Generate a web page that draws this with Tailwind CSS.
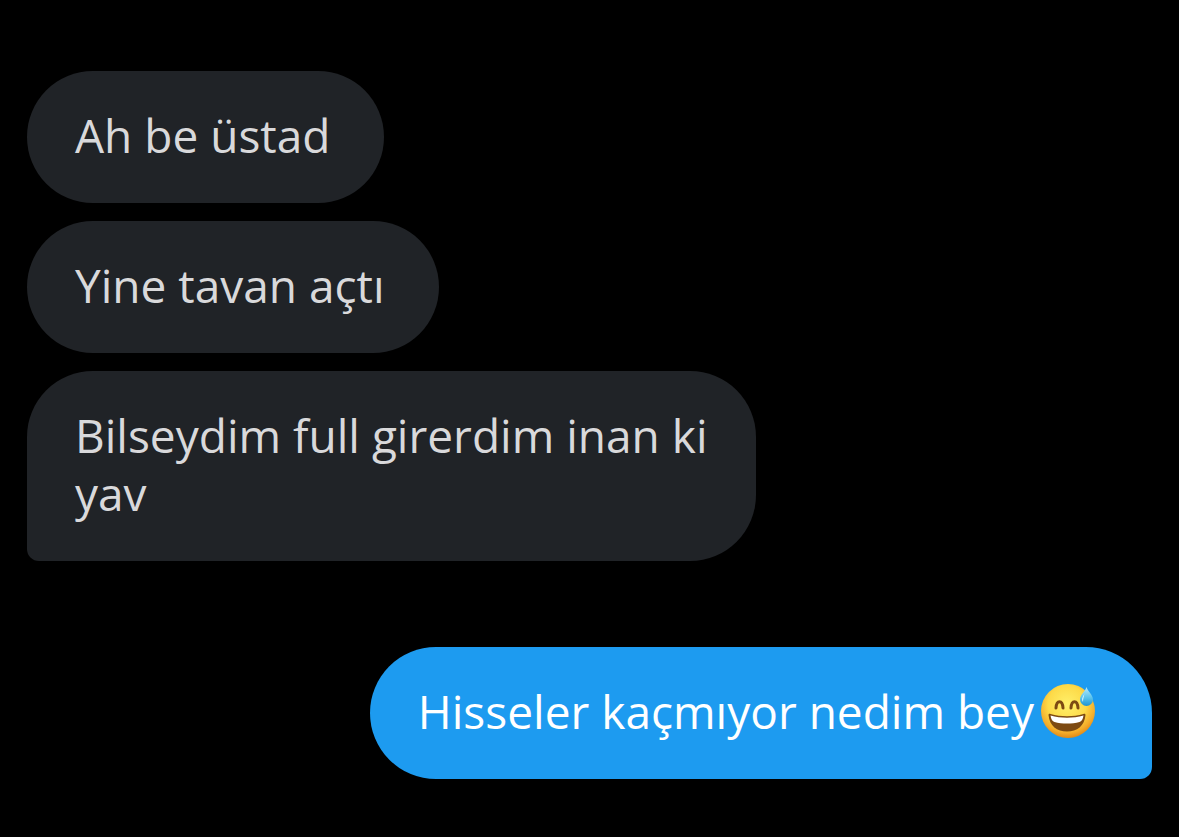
<!DOCTYPE html>
<html lang="tr">

<head>
    <meta charset="UTF-8">
    <meta name="viewport" content="width=device-width, initial-scale=1.0">
    <title>Mesajlar</title>
    <script src="https://cdn.jsdelivr.net/npm/@tailwindcss/browser@4"></script>
</head>

<body class="bg-black min-h-screen font-['Open_Sans',sans-serif] text-[46px] leading-[58px]">
    <main class="flex flex-col px-[27px] pt-[71px] pb-[58px]">
        <!-- Received messages -->
        <section class="flex flex-col items-start gap-[18px]">
            <p class="bg-[#202327] text-[#d9d9db] rounded-[66px] pl-12 pr-[54px] pt-[35px] pb-[39px]">Ah be üstad</p>
            <p class="bg-[#202327] text-[#d9d9db] rounded-[66px] pl-12 pr-[54px] pt-[35px] pb-[39px]">Yine tavan açtı</p>
            <p class="bg-[#202327] text-[#d9d9db] rounded-[66px] rounded-bl-[12px] px-12 pt-[35px] pb-[39px] max-w-[729px]">Bilseydim full girerdim inan ki yav</p>
        </section>

        <!-- Sent message -->
        <section class="flex flex-col items-end mt-[86px]">
            <p class="flex items-center gap-1.5 bg-[#1d9bf0] text-white rounded-[66px] rounded-br-[12px] pl-12 pr-14 pt-[35px] pb-[39px]">
                Hisseler kaçmıyor nedim bey
                <svg class="size-14 shrink-0" viewBox="0 0 56 56" role="img" aria-label="Terleyen gülen yüz">
                    <defs>
                        <radialGradient id="face" cx="0.48" cy="0.38" r="0.64">
                            <stop offset="0" stop-color="#fff06a" />
                            <stop offset="0.55" stop-color="#fdda48" />
                            <stop offset="0.82" stop-color="#f4ac2a" />
                            <stop offset="1" stop-color="#dd8214" />
                        </radialGradient>
                        <linearGradient id="drop" x1="0" y1="0" x2="0" y2="1">
                            <stop offset="0" stop-color="#b9ecfb" />
                            <stop offset="0.6" stop-color="#55c0ea" />
                            <stop offset="1" stop-color="#1f93d2" />
                        </linearGradient>
                    </defs>
                    <circle cx="28" cy="28" r="27" fill="url(#face)" />
                    <path d="M16 25C16.500 16.500 22.500 16.500 23 25M31 25C31.500 16.500 37.500 16.500 38 25" fill="none" stroke="#7d4a12" stroke-width="3" stroke-linecap="round" />
                    <path d="M8.500 32C8.500 31 9.500 30.500 10.500 31C21 34 33 34 43.500 31C44.500 30.500 45.500 31 45.500 32C44.500 43 37 48.500 27 48.500S9.500 43 8.500 32Z" fill="#7d4a12" />
                    <path d="M10.500 32.500C21 35.500 33 35.500 43.500 32.500C43 36 41.500 38.500 39.500 39C32 41 22 41 14.500 39C12.500 38.500 11 36 10.500 32.500Z" fill="#fff" />
                    <path d="M46.500 4C47.500 8 53 12 53 16.500A6.500 6.500 0 0 1 40 16.500C40 12 45.500 8 46.500 4Z" fill="url(#drop)" />
                    <path d="M44.500 11C42 14 41.500 17 43 19C43 16 43.500 14 44.500 11Z" fill="#e6f9ff" />
                </svg>
            </p>
        </section>
    </main>
</body>

</html>
